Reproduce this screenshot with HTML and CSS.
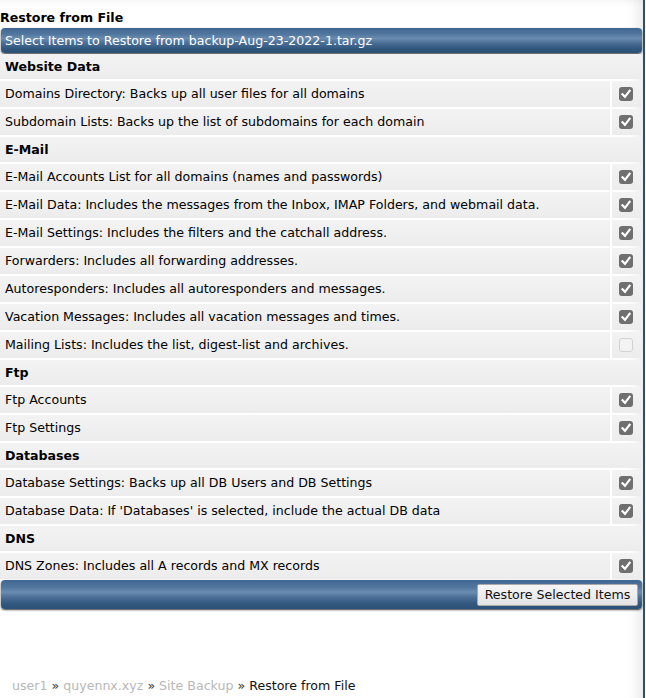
FILE: index.html
```html
<!DOCTYPE html>
<html>
<head>
<meta charset="utf-8">
<link rel="stylesheet" href="styles.css">
</head>
<body>
<div class="page">
  <h1 class="title">Restore from File</h1>
  <div class="bar head-bar">Select Items to Restore from backup-Aug-23-2022-1.tar.gz</div>
  <div class="list">
    <div class="section">Website Data</div>
    <div class="item"><div class="label">Domains Directory: Backs up all user files for all domains</div><div class="check"><span class="cb on"><svg viewBox="0 0 14 14"><path d="M3.5 7.2 L6 9.8 L10.6 3.8" /></svg></span></div></div>
    <div class="item"><div class="label">Subdomain Lists: Backs up the list of subdomains for each domain</div><div class="check"><span class="cb on"><svg viewBox="0 0 14 14"><path d="M3.5 7.2 L6 9.8 L10.6 3.8" /></svg></span></div></div>
    <div class="section">E-Mail</div>
    <div class="item"><div class="label">E-Mail Accounts List for all domains (names and passwords)</div><div class="check"><span class="cb on"><svg viewBox="0 0 14 14"><path d="M3.5 7.2 L6 9.8 L10.6 3.8" /></svg></span></div></div>
    <div class="item"><div class="label">E-Mail Data: Includes the messages from the Inbox, IMAP Folders, and webmail data.</div><div class="check"><span class="cb on"><svg viewBox="0 0 14 14"><path d="M3.5 7.2 L6 9.8 L10.6 3.8" /></svg></span></div></div>
    <div class="item"><div class="label">E-Mail Settings: Includes the filters and the catchall address.</div><div class="check"><span class="cb on"><svg viewBox="0 0 14 14"><path d="M3.5 7.2 L6 9.8 L10.6 3.8" /></svg></span></div></div>
    <div class="item"><div class="label">Forwarders: Includes all forwarding addresses.</div><div class="check"><span class="cb on"><svg viewBox="0 0 14 14"><path d="M3.5 7.2 L6 9.8 L10.6 3.8" /></svg></span></div></div>
    <div class="item"><div class="label">Autoresponders: Includes all autoresponders and messages.</div><div class="check"><span class="cb on"><svg viewBox="0 0 14 14"><path d="M3.5 7.2 L6 9.8 L10.6 3.8" /></svg></span></div></div>
    <div class="item"><div class="label">Vacation Messages: Includes all vacation messages and times.</div><div class="check"><span class="cb on"><svg viewBox="0 0 14 14"><path d="M3.5 7.2 L6 9.8 L10.6 3.8" /></svg></span></div></div>
    <div class="item"><div class="label">Mailing Lists: Includes the list, digest-list and archives.</div><div class="check"><span class="cb off"></span></div></div>
    <div class="section">Ftp</div>
    <div class="item"><div class="label">Ftp Accounts</div><div class="check"><span class="cb on"><svg viewBox="0 0 14 14"><path d="M3.5 7.2 L6 9.8 L10.6 3.8" /></svg></span></div></div>
    <div class="item"><div class="label">Ftp Settings</div><div class="check"><span class="cb on"><svg viewBox="0 0 14 14"><path d="M3.5 7.2 L6 9.8 L10.6 3.8" /></svg></span></div></div>
    <div class="section">Databases</div>
    <div class="item"><div class="label">Database Settings: Backs up all DB Users and DB Settings</div><div class="check"><span class="cb on"><svg viewBox="0 0 14 14"><path d="M3.5 7.2 L6 9.8 L10.6 3.8" /></svg></span></div></div>
    <div class="item"><div class="label">Database Data: If 'Databases' is selected, include the actual DB data</div><div class="check"><span class="cb on"><svg viewBox="0 0 14 14"><path d="M3.5 7.2 L6 9.8 L10.6 3.8" /></svg></span></div></div>
    <div class="section">DNS</div>
    <div class="item"><div class="label">DNS Zones: Includes all A records and MX records</div><div class="check"><span class="cb on"><svg viewBox="0 0 14 14"><path d="M3.5 7.2 L6 9.8 L10.6 3.8" /></svg></span></div></div>
  </div>
  <div class="bar foot-bar"><button class="btn">Restore Selected Items</button></div>
  <div class="crumbs"><a class="link">user1</a> <span class="sep">»</span> <a class="link">quyennx.xyz</a> <span class="sep">»</span> <a class="link">Site Backup</a> <span class="sep">»</span> <span class="current">Restore from File</span></div>
</div>
</body>
</html>
```

FILE: styles.css
```css
html, body {
  margin: 0;
  padding: 0;
  background: #ffffff;
}
body {
  font-family: "DejaVu Sans", Verdana, sans-serif;
  font-size: 12.6px;
  color: #000;
  width: 646px;
  height: 698px;
  overflow: hidden;
}
.page {
  width: 645px;
  height: 698px;
  box-sizing: border-box;
  border-right: 2px solid #2c5075;
  box-shadow: inset -16px 0 14px -12px rgba(0,0,0,0.10), inset 0 6px 6px -5px rgba(0,0,0,0.06);
  display: flex;
  flex-direction: column;
}
.title {
  margin: 0;
  padding: 9px 0 0 0;
  font-size: 12.6px;
  font-weight: bold;
  line-height: 17px;
  height: 19px;
}
.bar {
  margin-left: 1px;
  width: 641px;
  border-radius: 4px;
  background: linear-gradient(to bottom, #3f6690 0%, #52779f 25%, #6a8cb1 42%, #4a6e95 60%, #33587f 82%, #2b4f75 100%);
  box-shadow: 0 1px 2px rgba(0,0,0,0.75);
  box-sizing: border-box;
}
.head-bar {
  height: 25px;
  line-height: 25px;
  color: #fff;
  padding-left: 4px;
}
.list {
  display: flex;
  flex-direction: column;
  gap: 2px;
  margin-top: 1px;
  width: 641px;
}
.section {
  height: 25px;
  line-height: 25px;
  font-weight: bold;
  padding-left: 5px;
  background: linear-gradient(to bottom, #f3f3f3, #ececec);
}
.item {
  display: flex;
  gap: 2px;
  height: 26px;
}
.label {
  flex: 1;
  line-height: 25px;
  padding-left: 5px;
  background: linear-gradient(to bottom, #f3f3f3, #ececec);
  white-space: nowrap;
}
.check {
  width: 29px;
  display: flex;
  align-items: center;
  justify-content: flex-start;
  padding-left: 7px;
  box-sizing: border-box;
  background: linear-gradient(to bottom, #f3f3f3, #ececec);
}
.cb {
  width: 14px;
  height: 14px;
  box-sizing: border-box;
  border-radius: 3px;
  display: block;
}
.cb.on {
  background: #6f6f6f;
}
.cb.off {
  border: 1px solid #d2d2d2;
  background: #f3f3f3;
}
.cb svg {
  width: 14px;
  height: 14px;
  display: block;
}
.cb path {
  fill: none;
  stroke: #fff;
  stroke-width: 2.2;
  stroke-linecap: square;
}
.foot-bar {
  margin-top: 1px;
  height: 29px;
  display: flex;
  align-items: center;
  justify-content: flex-end;
  padding-right: 4px;
}
.btn {
  font-family: "DejaVu Sans", Verdana, sans-serif;
  font-size: 12.6px;
  color: #111;
  height: 22px;
  width: 161px;
  padding: 0;
  border: 1px solid #a9a9a9;
  border-radius: 2px;
  background: linear-gradient(to bottom, #f6f6f6, #e3e3e3);
}
.crumbs {
  margin-top: auto;
  padding: 0 0 4px 12px;
  line-height: 17px;
}
.link {
  color: #b8b8b8;
}
.sep {
  color: #333;
}
.current {
  color: #111;
}
```
